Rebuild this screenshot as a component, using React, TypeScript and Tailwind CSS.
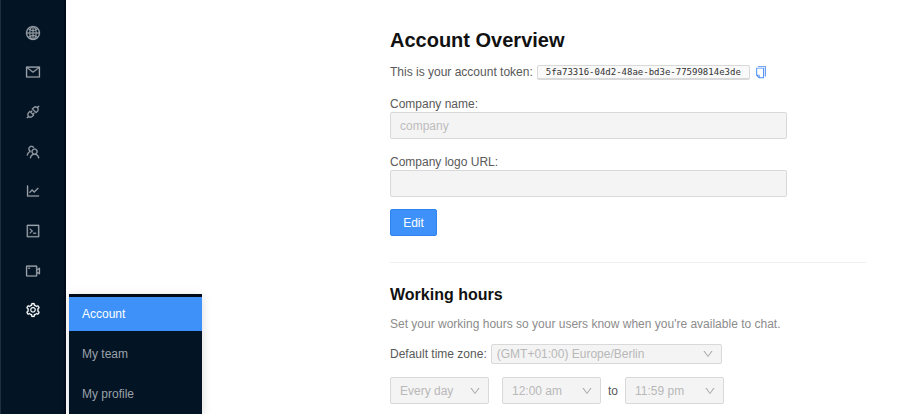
import type { ComponentType, ReactNode } from "react";
import {
  AiOutlineApi,
  AiOutlineCode,
  AiOutlineCopy,
  AiOutlineDown,
  AiOutlineGlobal,
  AiOutlineLineChart,
  AiOutlineMail,
  AiOutlineSetting,
  AiOutlineTeam,
  AiOutlineVideoCamera,
} from "react-icons/ai";

type NavItem = {
  label: string;
  icon: ComponentType<{ className?: string }>;
  active?: boolean;
};

const navItems: NavItem[] = [
  { label: "Getting started", icon: AiOutlineGlobal },
  { label: "Inbox", icon: AiOutlineMail },
  { label: "Integrations", icon: AiOutlineApi },
  { label: "Customers", icon: AiOutlineTeam },
  { label: "Reporting", icon: AiOutlineLineChart },
  { label: "Developers", icon: AiOutlineCode },
  { label: "Sessions", icon: AiOutlineVideoCamera },
  { label: "Settings", icon: AiOutlineSetting, active: true },
];

function Sidebar() {
  return (
    <aside className="relative w-[66px] shrink-0 bg-[#031425] pt-[13px] shadow-[inset_1px_0_0_#1d3040,inset_-2px_0_0_#000c1c]">
      <nav aria-label="Main" className="grid h-[317px] auto-rows-fr">
        {navItems.map(({ label, icon: Icon, active }) => (
          <a
            key={label}
            href="#"
            aria-label={label}
            className={`flex items-center justify-center ${active ? "text-white" : "text-[#9ba1a8]"}`}
          >
            <Icon className="size-4 stroke-[16px]" />
          </a>
        ))}
      </nav>
      <nav
        aria-label="Settings"
        className="absolute bottom-0 left-[69px] top-[294px] flex w-[133px] flex-col gap-[6px] border-t-[3px] border-[#00091a] bg-[#031425] text-xs shadow-[0_2px_10px_rgba(0,0,0,0.15)]"
      >
        <a href="#" className="flex h-[34px] shrink-0 items-center bg-[#3d91f9] pl-[13px] text-white">
          Account
        </a>
        <a href="#" className="flex h-[34px] shrink-0 items-center pl-[13px] text-[#9ba1a8]">
          My team
        </a>
        <a href="#" className="flex h-[34px] shrink-0 items-center pl-[13px] text-[#9ba1a8]">
          My profile
        </a>
      </nav>
    </aside>
  );
}

function Field({ id, label, placeholder }: { id: string; label: string; placeholder?: string }) {
  return (
    <div className="flex flex-col">
      <label htmlFor={id} className="leading-4">
        {label}
      </label>
      <input
        id={id}
        type="text"
        disabled
        placeholder={placeholder}
        className="h-[27px] w-5/6 rounded-xs border border-[#d9d9d9] bg-[#f4f4f4] px-[9px] placeholder:text-[#bdbdbd]"
      />
    </div>
  );
}

function Select({
  id,
  label,
  className,
  children,
}: {
  id: string;
  label?: string;
  className: string;
  children: ReactNode;
}) {
  return (
    <div className="relative flex">
      <select
        id={id}
        aria-label={label}
        disabled
        className={`appearance-none rounded-xs border border-[#d9d9d9] bg-[#f4f4f4] text-[#b8b8b8] opacity-100 ${className}`}
      >
        {children}
      </select>
      <AiOutlineDown className="pointer-events-none absolute inset-y-0 right-2 my-auto size-3 text-[#a8a8a8]" />
    </div>
  );
}

export default function App() {
  return (
    <div className="flex h-screen overflow-hidden bg-white font-['Liberation_Sans',Arial,sans-serif] text-xs text-[#595959]">
      <Sidebar />
      <main className="min-w-0 flex-1 pl-[324px] pr-[34px] pt-7">
        <section className="border-b border-[#f0f0f0] pb-[26px]">
          <h1 className="text-xl leading-6 font-bold text-[#111111]">Account Overview</h1>
          <p className="mt-3 flex h-4 items-center whitespace-nowrap">
            This is your account token:
            <code className="ml-1 rounded-xs border border-b-2 border-[#d9d9d9] bg-[#f9f9f9] px-2 font-['DejaVu_Sans_Mono',monospace] text-[9px] leading-3 text-[#333333]">
              5fa73316-04d2-48ae-bd3e-77599814e3de
            </code>
            <button type="button" aria-label="Copy token" className="ml-1 text-[#4a8cf5]">
              <AiOutlineCopy className="size-[14px]" />
            </button>
          </p>
          <form className="mt-4 flex flex-col gap-3">
            <div className="flex flex-col gap-[15px]">
              <Field id="company-name" label="Company name:" placeholder="company" />
              <Field id="company-logo" label="Company logo URL:" />
            </div>
            <button
              type="button"
              className="h-[27px] w-[47px] rounded-xs border border-[#2f84ee] bg-[#3d91f9] text-white"
            >
              Edit
            </button>
          </form>
        </section>
        <section className="pt-[22px]">
          <h2 className="text-base leading-5 font-bold text-[#111111]">Working hours</h2>
          <p className="mt-[11px] leading-4 whitespace-nowrap text-[#8c8c8c]">
            Set your working hours so your users know when you're available to chat.
          </p>
          <div className="mt-3 flex items-center gap-1">
            <label htmlFor="time-zone">Default time zone:</label>
            <Select id="time-zone" className="h-5 w-[231px] pl-[5px]">
              <option>(GMT+01:00) Europe/Berlin</option>
            </Select>
          </div>
          <div className="mt-[13px] flex items-center">
            <Select id="days" label="Days" className="h-[27px] w-[99px] pl-[9px]">
              <option>Every day</option>
            </Select>
            <div className="ml-[13px] flex items-center">
              <Select id="start" label="Start time" className="h-[27px] w-[99px] pl-[9px]">
                <option>12:00 am</option>
              </Select>
              <span className="px-[7px]">to</span>
              <Select id="end" label="End time" className="h-[27px] w-[99px] pl-[9px]">
                <option>11:59 pm</option>
              </Select>
            </div>
          </div>
        </section>
      </main>
    </div>
  );
}
